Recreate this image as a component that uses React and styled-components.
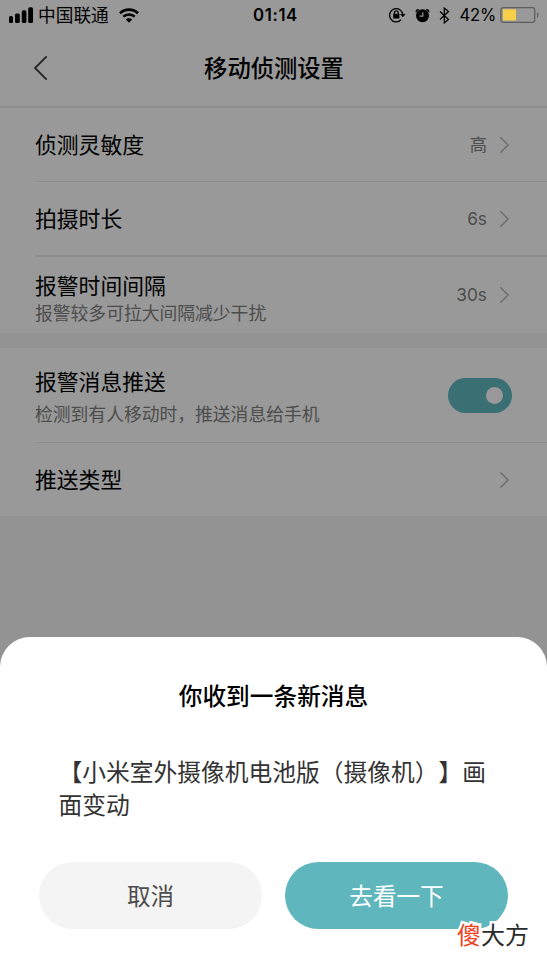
import React from "react";
import styled, { createGlobalStyle } from "styled-components";

const GlobalStyle = createGlobalStyle`
  * { box-sizing: border-box; }
  body {
    margin: 0;
    background: #939393;
    font-family: Inter, "Noto Sans CJK SC", sans-serif;
    text-spacing-trim: space-all;
  }
`;

const Screen = styled.div`
  width: 547px;
  height: 973px;
  display: flex;
  flex-direction: column;
  background: #939393;
  overflow: hidden;
`;

const StatusBar = styled.div`
  height: 30px;
  flex: none;
  display: grid;
  grid-template-columns: 1fr auto 1fr;
  align-items: center;
  padding: 0 8px 0 9px;
  background: #999;
  color: #000;
  font-size: 17px;
  line-height: 30px;
`;

const StatusGroup = styled.div`
  display: flex;
  align-items: center;
  justify-content: ${(p) => (p.$end ? "flex-end" : "flex-start")};
  height: 30px;
`;

const Carrier = styled.span`
  font-size: 17.7px;
  line-height: 28px;
  padding-top: 2px;
  margin: 0 10px 0 5px;
`;

const Clock = styled.span`
  padding-left: 3px;
  font-size: 16.8px;
  font-weight: 600;
  letter-spacing: 0.6px;
`;

const Percent = styled.span`
  font-size: 16.6px;
  letter-spacing: -0.2px;
  margin: 0 4px 0 9px;
`;

const Header = styled.header`
  height: 78px;
  flex: none;
  display: grid;
  grid-template-columns: 60px 1fr 60px;
  align-items: center;
  background: #999;
  border-bottom: 2px solid #8e8e8e;
`;

const BackButton = styled.button`
  display: flex;
  padding: 0 0 0 33px;
  border: 0;
  background: none;
`;

const Title = styled.h1`
  margin: 0;
  padding: 2px 0 0 1px;
  text-align: center;
  font-size: 23.3px;
  line-height: 34px;
  font-weight: 500;
  color: #000;
`;

const Group = styled.section`
  flex: none;
  padding-left: 35px;
  margin-bottom: 15px;
  background: #999;
`;

const Row = styled.div`
  height: ${(p) => p.$height}px;
  display: flex;
  align-items: center;
  padding-right: 35px;
  border-bottom: ${(p) => p.$line || 0}px solid #8e8e8e;
`;

const Labels = styled.div`
  flex: 1;
  display: flex;
  flex-direction: column;
  gap: ${(p) => p.$gap || 0}px;
  padding-top: ${(p) => p.$drop || 0}px;
`;

const Label = styled.span`
  font-size: 21.8px;
  line-height: 26px;
  color: #000;
`;

const Hint = styled.span`
  font-size: 17.8px;
  line-height: 26px;
  color: #4c4c4c;
`;

const Value = styled.span`
  margin-right: 12px;
  font-size: 17.3px;
  line-height: 26px;
  color: #4c4c4c;
`;

const Switch = styled.div`
  width: 64px;
  height: 35px;
  display: flex;
  align-items: center;
  justify-content: flex-end;
  padding-right: 9px;
  border-radius: 18px;
  background: #3a6f73;
`;

const Knob = styled.div`
  width: 17px;
  height: 17px;
  border-radius: 50%;
  background: #999;
`;

const Sheet = styled.div`
  position: absolute;
  top: 637px;
  left: 0;
  width: 547px;
  height: 336px;
  padding: 43px 39px 0;
  border-radius: 30px 30px 0 0;
  background: #fff;
`;

const SheetTitle = styled.h2`
  margin: 0;
  text-align: center;
  font-size: 23.7px;
  line-height: 34px;
  font-weight: 500;
  color: #000;
`;

const Message = styled.p`
  margin: 40px 18px 0 19.5px;
  height: 108px;
  font-family: "Noto Sans CJK SC", sans-serif;
  font-size: 23.75px;
  line-height: 33px;
  color: #333;
`;

const Actions = styled.div`
  display: grid;
  grid-template-columns: 223px 223px;
  justify-content: space-between;
`;

const Action = styled.button`
  height: 67px;
  padding: 2px 0 0;
  border: 0;
  border-radius: 34px;
  font: inherit;
  font-size: 23.6px;
  line-height: 34px;
  background: ${(p) => (p.$primary ? "#5fb7bd" : "#f4f4f4")};
  color: ${(p) => (p.$primary ? "#fff" : "#4c4c4c")};
`;

const Watermark = styled.div`
  position: absolute;
  left: 457px;
  top: 918px;
  font-size: 24px;
  line-height: 36px;
  color: #2b2b2b;
  paint-order: stroke fill;
  -webkit-text-stroke: 5px #fff;
`;

const Accent = styled.span`
  color: #f0401c;
`;

const Signal = () => (
  <svg width="24" height="16" viewBox="0 0 24 16">
    <rect x="0" y="9" width="4" height="7" rx="1.5" />
    <rect x="6" y="6.5" width="4.8" height="9.5" rx="1.6" />
    <rect x="12.8" y="3.3" width="4.6" height="12.7" rx="1.6" />
    <rect x="19.2" y="0.3" width="4.8" height="15.7" rx="1.6" />
  </svg>
);

const Wifi = () => (
  <svg width="20" height="15" viewBox="0 0 20 15" fill="none" stroke="#000">
    <path d="M1 5.2C6 .4 14 .4 19 5.2" strokeWidth="2.7" />
    <path d="M4.3 8.7c3.2-3 8.2-3 11.4 0" strokeWidth="2.5" />
    <path d="M10 14.8 6.8 11.5c1.8-1.7 4.6-1.7 6.4 0Z" fill="#000" stroke="none" />
  </svg>
);

const RotationLock = () => (
  <svg width="17" height="16" viewBox="0 0 17 16" fill="none" stroke="#000" strokeWidth="1.3">
    <path d="M12 12.8A6.6 6.6 0 1 1 13.8 7.8" />
    <path d="M11 7h5.6l-2.8 3.2Z" fill="#000" stroke="none" />
    <rect x="4.2" y="6.8" width="6.2" height="4.7" fill="#000" stroke="none" />
    <path d="M5.4 7.3V5.7a1.9 1.9 0 0 1 3.8 0v1.6" />
  </svg>
);

const Alarm = () => (
  <svg width="15" height="15" viewBox="0 0 15 15">
    <circle cx="7.5" cy="7.7" r="6.5" />
    <path d="M.9 4.7C-.2 2.4 2 .3 4.2 1.3ZM14.1 4.7c1.1-2.3-1.1-4.4-3.3-3.4Z" />
    <path d="M7.8 4.2v4H4.6" fill="none" stroke="#999" strokeWidth="1.2" />
  </svg>
);

const Bluetooth = () => (
  <svg width="11" height="17" viewBox="0 0 11 17" fill="none" stroke="#000" strokeWidth="1.3">
    <path d="m1 4.5 8.5 8-4.2 3.4V1.1l4.2 3.4-8.5 8" />
  </svg>
);

const Battery = () => (
  <svg width="39" height="16" viewBox="0 0 39 16">
    <rect x="0.9" y="0.7" width="33.8" height="14.6" rx="2.2" fill="none" stroke="#5e5e5e" strokeWidth="1.3" />
    <rect x="3" y="2.3" width="13" height="11.2" fill="#f8cf48" />
    <path d="M37 5.2c2 1 2 4.6 0 5.6Z" fill="#5e5e5e" />
  </svg>
);

const Back = () => (
  <svg width="16" height="26" viewBox="0 0 16 26" fill="none" stroke="#262626" strokeWidth="1.8">
    <path d="M13.7 1.3 2 13l11.7 11.7" />
  </svg>
);

const Chevron = () => (
  <svg width="13" height="18" viewBox="0 0 13 18" fill="none" stroke="#6b6b6b" strokeWidth="1.3">
    <path d="m1.3 1.3 7.8 7.7-7.8 7.7" />
  </svg>
);

const Icons = styled.div`
  display: flex;
  align-items: center;
  gap: 9px;
`;

export default function App() {
  return (
    <Screen>
      <GlobalStyle />
      <StatusBar>
        <StatusGroup>
          <Signal />
          <Carrier>中国联通</Carrier>
          <Wifi />
        </StatusGroup>
        <Clock>01:14</Clock>
        <StatusGroup $end>
          <Icons>
            <RotationLock />
            <Alarm />
            <Bluetooth />
          </Icons>
          <Percent>42%</Percent>
          <Battery />
        </StatusGroup>
      </StatusBar>
      <Header>
        <BackButton aria-label="返回">
          <Back />
        </BackButton>
        <Title>移动侦测设置</Title>
      </Header>
      <Group>
        <Row $height={74} $line={1}>
          <Labels><Label>侦测灵敏度</Label></Labels>
          <Value>高</Value>
          <Chevron />
        </Row>
        <Row $height={75} $line={2}>
          <Labels><Label>拍摄时长</Label></Labels>
          <Value>6s</Value>
          <Chevron />
        </Row>
        <Row $height={76}>
          <Labels $gap={2} $drop={9}>
            <Label>报警时间间隔</Label>
            <Hint>报警较多可拉大间隔减少干扰</Hint>
          </Labels>
          <Value>30s</Value>
          <Chevron />
        </Row>
      </Group>
      <Group>
        <Row $height={95} $line={1}>
          <Labels $gap={7} $drop={6}>
            <Label>报警消息推送</Label>
            <Hint>检测到有人移动时，推送消息给手机</Hint>
          </Labels>
          <Switch role="switch" aria-checked="true">
            <Knob />
          </Switch>
        </Row>
        <Row $height={73}>
          <Labels><Label>推送类型</Label></Labels>
          <Chevron />
        </Row>
      </Group>
      <Sheet role="dialog">
        <SheetTitle>你收到一条新消息</SheetTitle>
        <Message>【小米室外摄像机电池版（摄像机）】画面变动</Message>
        <Actions>
          <Action>取消</Action>
          <Action $primary>去看一下</Action>
        </Actions>
      </Sheet>
      <Watermark><Accent>傻</Accent>大方</Watermark>
    </Screen>
  );
}
